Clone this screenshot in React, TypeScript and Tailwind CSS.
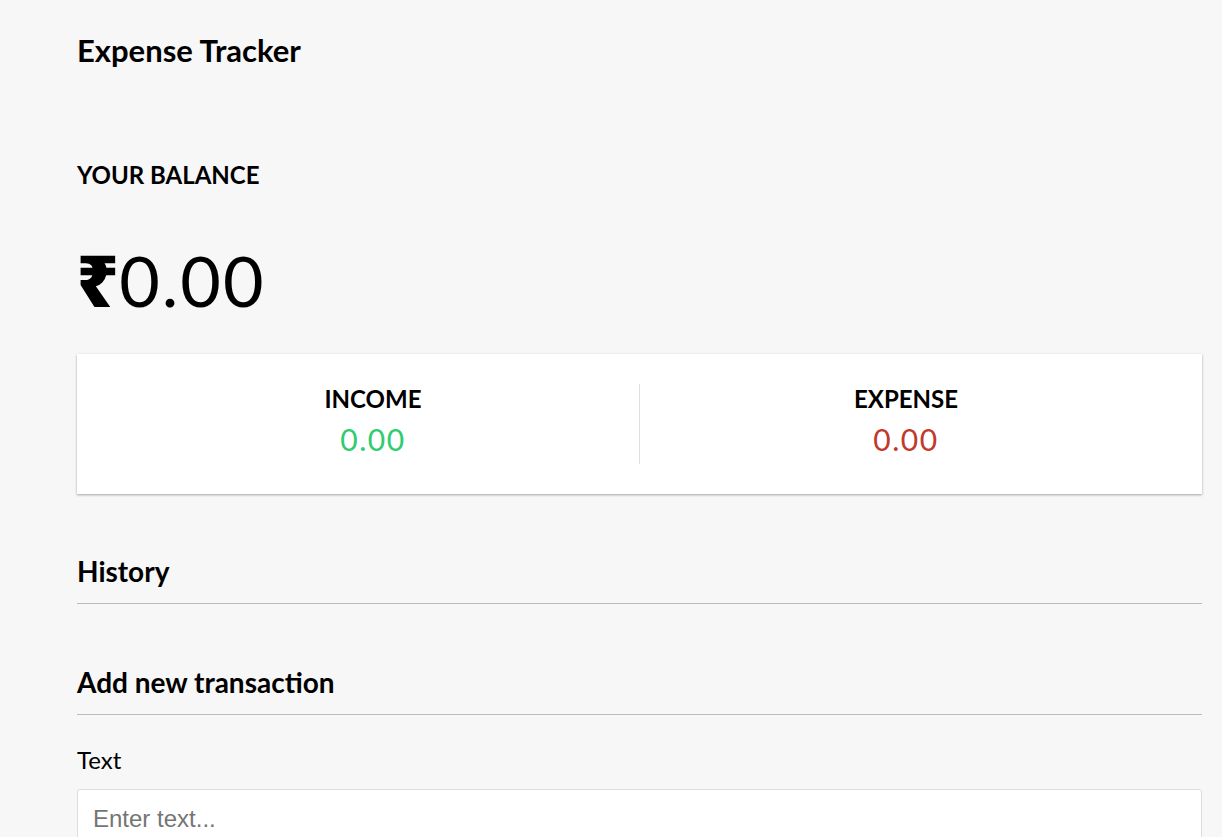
import { useState } from 'react';

const lato = "font-['Lato','Noto_Sans',sans-serif]";

export default function App() {
  const [text, setText] = useState('');

  return (
    <div className={`min-h-screen w-full bg-[#f7f7f7] text-black ${lato}`}>
      <div className="pl-[77px] pr-[20px] pt-[32px] pb-10">
        <h2 className="text-[31px] leading-[37px] font-bold">Expense Tracker</h2>

        {/* balance */}
        <h4 className="mt-[91px] text-[24px] leading-[29px] font-bold uppercase">Your Balance</h4>
        <h1 className="mt-[47px] h-[89px] text-[70px] leading-[89px] font-normal tracking-[2px]">
          <span className="font-['Noto_Sans','DejaVu_Sans',sans-serif] text-[72px] leading-none font-black tracking-normal">₹</span>0.00
        </h1>

        {/* income / expense */}
        <div className="mt-[29px] flex bg-white p-[30px] shadow-[0_1px_3px_rgba(0,0,0,0.12),0_1px_2px_rgba(0,0,0,0.24)]">
          <div className="flex-1 border-r border-[#dedede] text-center">
            <h4 className="text-[24px] leading-[29px] font-bold uppercase">Income</h4>
            <p className="my-[7.5px] text-[30px] leading-[36px] tracking-[1.5px] text-[#2ecc71]">0.00</p>
          </div>
          <div className="flex-1 text-center">
            <h4 className="text-[24px] leading-[29px] font-bold uppercase">Expense</h4>
            <p className="my-[7.5px] text-[30px] leading-[36px] tracking-[1.5px] text-[#c0392b]">0.00</p>
          </div>
        </div>

        <h3 className="mt-[60px] border-b border-[#bbb] pb-[15px] text-[28px] leading-[34px] font-bold">History</h3>
        <ul className="list-none p-0" />

        <h3 className="mt-[61px] border-b border-[#bbb] pb-[15px] text-[28px] leading-[34px] font-bold">
          Add new transaction
        </h3>
        <form className="mt-[15px]" onSubmit={(e) => e.preventDefault()}>
          <div>
            <label htmlFor="text" className="my-[15px] inline-block text-[24px] leading-[29px]">
              Text
            </label>
            <input
              id="text"
              type="text"
              value={text}
              onChange={(e) => setText(e.target.value)}
              placeholder="Enter text..."
              className="block w-full rounded-[3px] border border-[#dedede] bg-white px-[15px] py-[15px] font-['Liberation_Sans',Arial,sans-serif] text-[24px] leading-[28px] outline-none placeholder:text-[#757575]"
            />
          </div>
        </form>
      </div>
    </div>
  );
}
